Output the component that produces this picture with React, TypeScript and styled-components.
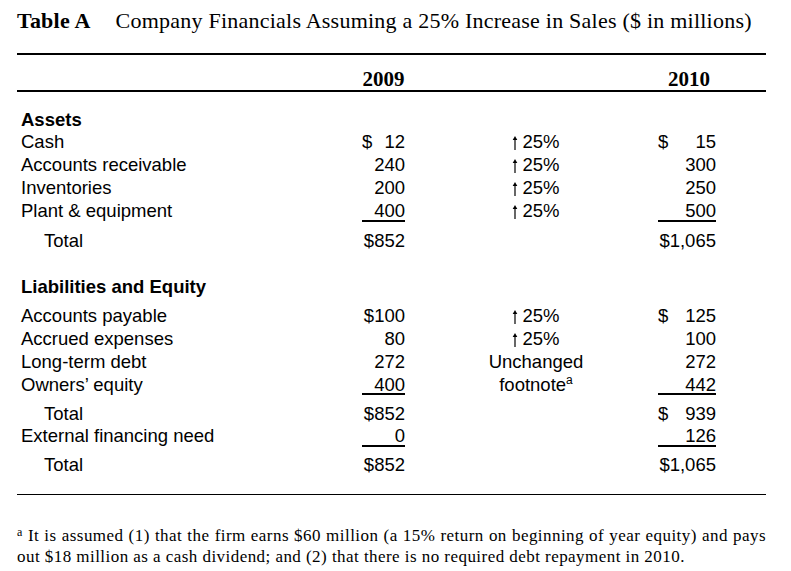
import styled, { createGlobalStyle } from 'styled-components'

type Line = {
  label: string
  bold?: boolean
  indent?: boolean
  space?: number
  y09?: string
  d09?: boolean
  y10?: string
  d10?: boolean
  up?: boolean
  change?: string
  sup?: string
  rule?: boolean
}

const lines: Line[] = [
  { label: 'Assets', bold: true, space: 16.6 },
  { label: 'Cash', y09: '12', d09: true, up: true, change: '25%', y10: '15', d10: true },
  { label: 'Accounts receivable', y09: '240', up: true, change: '25%', y10: '300' },
  { label: 'Inventories', y09: '200', up: true, change: '25%', y10: '250' },
  { label: 'Plant & equipment', y09: '400', up: true, change: '25%', y10: '500', rule: true },
  { label: 'Total', indent: true, space: 7.7, y09: '$852', y10: '$1,065' },
  { label: 'Liabilities and Equity', bold: true, space: 22.5 },
  { label: 'Accounts payable', space: 6.9, y09: '$100', up: true, change: '25%', y10: '125', d10: true },
  { label: 'Accrued expenses', y09: '80', up: true, change: '25%', y10: '100' },
  { label: 'Long-term debt', y09: '272', change: 'Unchanged', y10: '272' },
  { label: 'Owners’ equity', y09: '400', change: 'footnote', sup: 'a', y10: '442', rule: true },
  { label: 'Total', indent: true, space: 6.1, y09: '$852', y10: '939', d10: true },
  { label: 'External financing need', y09: '0', y10: '126', rule: true },
  { label: 'Total', indent: true, space: 5.4, y09: '$852', y10: '$1,065' },
]

const GlobalStyle = createGlobalStyle`
  html, body {
    margin: 0;
    padding: 0;
    background: #fff;
  }
  body {
    color: #000;
  }
`

const UpArrow = () => (
  <Arrow width="6" height="14" viewBox="0 0 6 14">
    <polygon points="3,0 5.3,4 0.7,4" fill="#000" />
    <line x1="3" y1="3" x2="3" y2="14" stroke="#000" strokeWidth="1.2" />
  </Arrow>
)

const Amount = ({ value, dollar, rule }: { value?: string; dollar?: boolean; rule?: boolean }) => (
  <AmountCell $rule={rule}>
    {dollar && <span>$</span>}
    <AmountValue>{value}</AmountValue>
  </AmountCell>
)

const App = () => {
  return (
    <Page>
      <GlobalStyle />
      <Title>
        <TitleLabel>Table A</TitleLabel>
        Company Financials Assuming a 25% Increase in Sales ($ in millions)
      </Title>
      <Table>
        <HeaderRow>
          <span />
          <YearHead>2009</YearHead>
          <span />
          <YearHead $shift={4}>2010</YearHead>
        </HeaderRow>
        {lines.map((line, i) => (
          <Row key={i} $space={line.space}>
            <Label $bold={line.bold} $indent={line.indent}>
              {line.label}
            </Label>
            {!line.bold && (
              <>
                <Amount value={line.y09} dollar={line.d09} rule={line.rule} />
                <Change>
                  {line.up && <UpArrow />}
                  {line.change}
                  {line.sup && <Sup>{line.sup}</Sup>}
                </Change>
                <Amount value={line.y10} dollar={line.d10} rule={line.rule} />
              </>
            )}
          </Row>
        ))}
      </Table>
      <Footnote>
        <FirstLine>
          <FootSup>a</FootSup> It is assumed (1) that the firm earns $60 million (a 15% return on beginning of year
          equity) and pays
        </FirstLine>
        out $18 million as a cash dividend; and (2) that there is no required debt repayment in 2010.
      </Footnote>
    </Page>
  )
}

export default App

const Page = styled.div`
  width: 749px;
  padding: 9px 0 0 17px;
`

const Title = styled.div`
  font-family: 'Liberation Serif', 'Times New Roman', serif;
  font-size: 22px;
  line-height: 24px;
  white-space: nowrap;
  letter-spacing: 0.23px;
`

const TitleLabel = styled.span`
  font-weight: bold;
  margin-right: 25px;
`

const Table = styled.div`
  margin-top: 20px;
  border-top: 2px solid #000;
  border-bottom: 1px solid #000;
  padding-bottom: 17.6px;
  font-family: 'Liberation Sans', Arial, sans-serif;
  font-size: 18.5px;
`

const grid = `
  display: grid;
  grid-template-columns: 345px 43px 253px 58px 1fr;
`

const HeaderRow = styled.div`
  ${grid}
  padding-top: 13px;
  height: 22px;
  border-bottom: 2px solid #000;
`

const YearHead = styled.div<{ $shift?: number }>`
  font-family: 'Liberation Serif', 'Times New Roman', serif;
  font-weight: bold;
  font-size: 21px;
  line-height: 22px;
  text-align: center;
  padding-left: ${(p) => p.$shift ?? 0}px;
`

const Row = styled.div<{ $space?: number }>`
  ${grid}
  height: 22.8px;
  line-height: 22.8px;
  margin-top: ${(p) => p.$space ?? 0}px;
`

const Label = styled.div<{ $bold?: boolean; $indent?: boolean }>`
  grid-column: ${(p) => (p.$bold ? '1 / -1' : '1')};
  padding-left: ${(p) => (p.$indent ? 27 : 4)}px;
  font-weight: ${(p) => (p.$bold ? 'bold' : 'normal')};
  white-space: nowrap;
`

const AmountCell = styled.div<{ $rule?: boolean }>`
  position: relative;
  display: flex;
  justify-content: space-between;
  white-space: nowrap;

  &::after {
    content: '';
    display: ${(p) => (p.$rule ? 'block' : 'none')};
    position: absolute;
    left: 0;
    right: 0;
    bottom: 1px;
    height: 2px;
    background: #000;
  }
`

const AmountValue = styled.span`
  margin-left: auto;
`

const Change = styled.div`
  text-align: center;
  padding-left: 9px;
  white-space: nowrap;
`

const Arrow = styled.svg`
  display: inline-block;
  vertical-align: -2px;
  margin-right: 4px;
`

const Sup = styled.sup`
  font-size: 12px;
  line-height: 0;
`

const Footnote = styled.p`
  margin: 30px 0 0;
  font-family: 'Liberation Serif', 'Times New Roman', serif;
  font-size: 17px;
  line-height: 21px;
  letter-spacing: 0.45px;
`

const FirstLine = styled.span`
  display: block;
  text-align: justify;
  text-align-last: justify;
`

const FootSup = styled.sup`
  font-size: 12px;
  line-height: 0;
  vertical-align: 5px;
`
